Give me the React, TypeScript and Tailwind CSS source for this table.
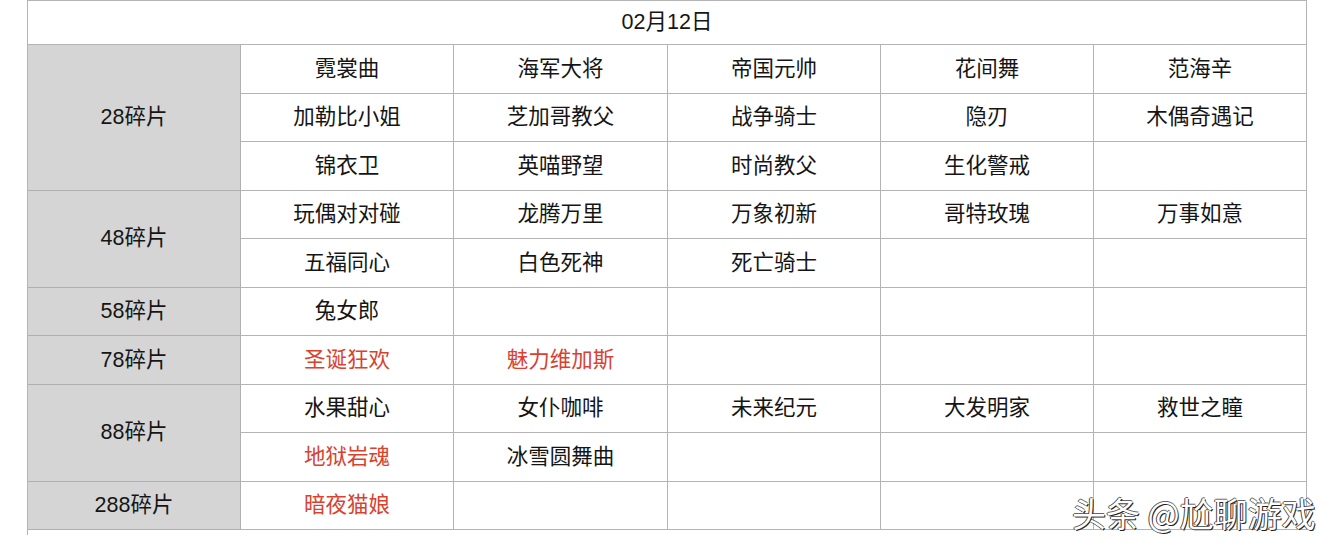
import React from 'react';

type Cell = { t: string; red?: boolean };

const groups: { label: string; rows: Cell[][] }[] = [
    {
        label: '28碎片',
        rows: [
            [{ t: '霓裳曲' }, { t: '海军大将' }, { t: '帝国元帅' }, { t: '花间舞' }, { t: '范海辛' }],
            [{ t: '加勒比小姐' }, { t: '芝加哥教父' }, { t: '战争骑士' }, { t: '隐刃' }, { t: '木偶奇遇记' }],
            [{ t: '锦衣卫' }, { t: '英喵野望' }, { t: '时尚教父' }, { t: '生化警戒' }, { t: '' }],
        ],
    },
    {
        label: '48碎片',
        rows: [
            [{ t: '玩偶对对碰' }, { t: '龙腾万里' }, { t: '万象初新' }, { t: '哥特玫瑰' }, { t: '万事如意' }],
            [{ t: '五福同心' }, { t: '白色死神' }, { t: '死亡骑士' }, { t: '' }, { t: '' }],
        ],
    },
    {
        label: '58碎片',
        rows: [[{ t: '兔女郎' }, { t: '' }, { t: '' }, { t: '' }, { t: '' }]],
    },
    {
        label: '78碎片',
        rows: [[{ t: '圣诞狂欢', red: true }, { t: '魅力维加斯', red: true }, { t: '' }, { t: '' }, { t: '' }]],
    },
    {
        label: '88碎片',
        rows: [
            [{ t: '水果甜心' }, { t: '女仆咖啡' }, { t: '未来纪元' }, { t: '大发明家' }, { t: '救世之瞳' }],
            [{ t: '地狱岩魂', red: true }, { t: '冰雪圆舞曲' }, { t: '' }, { t: '' }, { t: '' }],
        ],
    },
    {
        label: '288碎片',
        rows: [[{ t: '暗夜猫娘', red: true }, { t: '' }, { t: '' }, { t: '' }, { t: '' }]],
    },
];

const spanClass: Record<number, string> = {
    1: 'row-span-1',
    2: 'row-span-2',
    3: 'row-span-3',
};

export default function App() {
    return (
        <div className="relative w-[1334px] h-[547px] overflow-hidden bg-white text-[21.5px] text-[#151515] font-['Liberation_Sans','Noto_Sans_CJK_SC',sans-serif]">
            <div className="ml-[27px] w-[1280px] border-l border-t border-[#b4b4b4] grid grid-cols-[213px_213px_214px_213px_213px_213px] grid-rows-[44px_repeat(10,48.5px)]">
                <div className="col-span-6 flex items-center justify-center border-r border-b border-[#b4b4b4]">02月12日</div>
                {groups.map(g => (
                    <React.Fragment key={g.label}>
                        <div className={`${spanClass[g.rows.length]} flex items-center justify-center bg-[#d5d5d5] border-r border-b border-[#b0b0b0]`}>
                            {g.label}
                        </div>
                        {g.rows.map((r, i) =>
                            r.map((c, j) => (
                                <div
                                    key={`${i}-${j}`}
                                    className={`flex items-center justify-center border-r border-b border-[#b4b4b4] ${c.red ? 'text-[#d8422f]' : ''}`}
                                >
                                    {c.t}
                                </div>
                            ))
                        )}
                    </React.Fragment>
                ))}
            </div>
            <div className="ml-[27px] h-[5px] border-l border-[#b4b4b4]" />

            <div className="absolute left-[1072px] top-[492px] text-[34px] leading-[42px] text-white font-['Noto_Sans_CJK_SC',sans-serif] [text-shadow:1px_1px_0_#222,-1px_0_0_#444,0_-1px_0_#666]">
                头条 @尬聊游戏
            </div>
        </div>
    );
}
